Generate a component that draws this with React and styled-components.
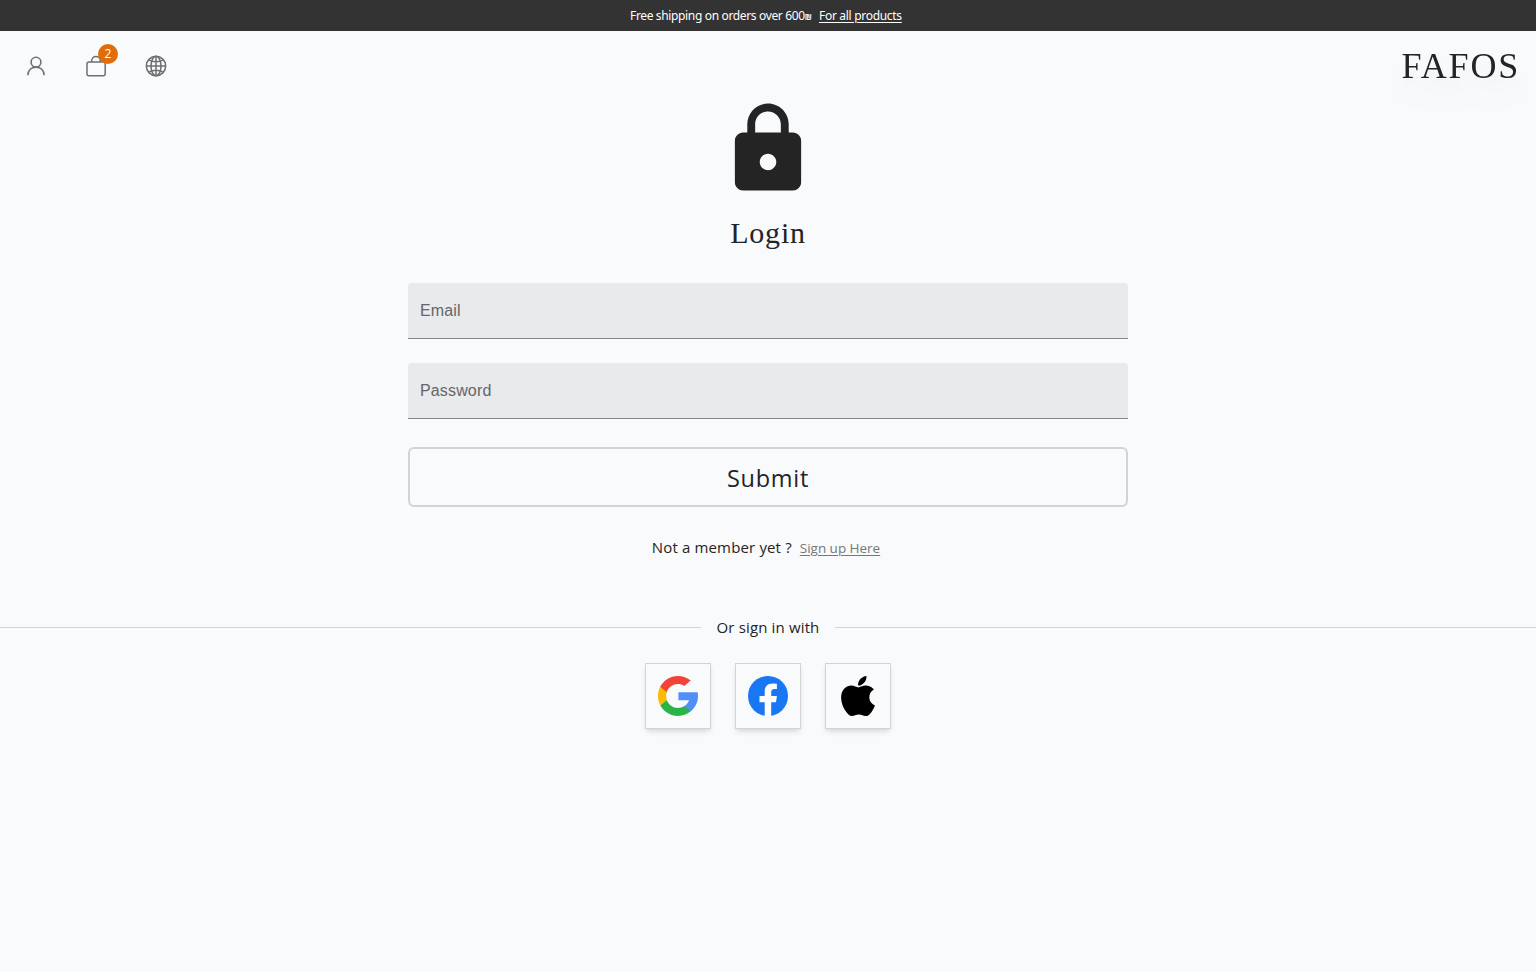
import React from "react";
import styled, { createGlobalStyle } from "styled-components";
import { IoMdLock } from "react-icons/io";
import { FaApple } from "react-icons/fa";

const GlobalStyle = createGlobalStyle`
  *, *::before, *::after { box-sizing: border-box; }
  body {
    margin: 0;
    background: #f8fafc;
    color: #242424;
    font-family: "Open Sans", "Noto Sans", sans-serif;
  }
`;

const Page = styled.div`
  min-height: 972px;
  overflow: hidden;
`;

const Banner = styled.div`
  display: flex;
  justify-content: center;
  align-items: center;
  gap: 8px;
  height: 31px;
  padding-right: 4px;
  background: #333;
  color: #fff;
  font-family: "Noto Sans", sans-serif;
  font-size: 12px;
  line-height: 16px;
  white-space: nowrap;
`;

const BannerText = styled.span`
  width: 181px;
  height: 16px;
  letter-spacing: -0.35px;
`;

const Shekel = styled.span`
  font-size: 8px;
  font-weight: 600;
  line-height: 8px;
  letter-spacing: -1px;
`;

const BannerLink = styled.a`
  width: 83px;
  height: 16px;
  letter-spacing: -0.3px;
  text-decoration: underline;
  text-underline-offset: 2px;
  text-decoration-thickness: 1px;
`;

const Header = styled.header`
  display: flex;
  justify-content: space-between;
  align-items: center;
  height: 70px;
  padding: 0 16px 0 24px;
`;

const Nav = styled.nav`
  display: flex;
  gap: 36px;
  color: #6f6f6f;
`;

const NavButton = styled.a`
  position: relative;
  display: block;
  width: 24px;
  height: 24px;
  svg { display: block; }
`;

const Badge = styled.span`
  position: absolute;
  top: -10px;
  left: 14px;
  width: 20px;
  height: 20px;
  border-radius: 50%;
  background: #e06c0c;
  color: #fff;
  font-size: 12px;
  line-height: 20px;
  text-align: center;
`;

const Logo = styled.div`
  font-family: "Liberation Serif", serif;
  font-size: 36px;
  line-height: 40px;
  letter-spacing: 1.8px;
  filter: drop-shadow(0 20px 13px rgba(0, 0, 0, 0.04)) drop-shadow(0 8px 5px rgba(0, 0, 0, 0.04));
`;

const LoginPanel = styled.main`
  display: flex;
  flex-direction: column;
  align-items: center;
  width: 720px;
  margin: 0 auto;
`;

const LockIcon = styled(IoMdLock)`
  display: block;
  width: 106px;
  height: 106px;
  margin-top: -7px;
`;

const Title = styled.h1`
  margin: 15px 0 32px;
  font-family: "Liberation Serif", serif;
  font-size: 30px;
  line-height: 36px;
  font-weight: 400;
  letter-spacing: 0.8px;
`;

const Field = styled.label`
  display: flex;
  align-items: center;
  width: 100%;
  height: 56px;
  margin-bottom: 24px;
  padding: 0 12px;
  border-bottom: 1px solid #858688;
  border-radius: 4px 4px 0 0;
  background: #e8eaeb;
  color: #656667;
  font-family: "Liberation Sans", sans-serif;
  font-size: 16px;
  letter-spacing: 0.15px;
`;

const SubmitButton = styled.button`
  width: 100%;
  height: 60px;
  margin-top: 4px;
  padding: 2px 0 0;
  border: 2px solid #d1d3d8;
  border-radius: 6px;
  background: transparent;
  color: #242424;
  font-family: inherit;
  font-size: 23.5px;
  font-weight: 400;
  line-height: 32px;
  letter-spacing: 0.7px;
`;

const SignUp = styled.div`
  display: flex;
  align-items: center;
  gap: 8px;
  height: 24px;
  margin: 28px 4px 0 0;
  font-size: 15px;
  white-space: nowrap;
`;

const Question = styled.span`
  letter-spacing: 0.15px;
`;

const SignUpLink = styled.a`
  padding-top: 1px;
  color: #777;
  font-size: 13.5px;
  letter-spacing: -0.02px;
  text-decoration: underline;
  text-decoration-thickness: 1px;
  text-underline-offset: 2px;
`;

const Divider = styled.div`
  display: flex;
  align-items: center;
  gap: 16px;
  height: 24px;
  margin-top: 56px;
  font-size: 15px;
  letter-spacing: 0.15px;
  white-space: nowrap;
  &::before, &::after {
    content: "";
    flex: 1;
    height: 1px;
    background: #d1d3d8;
  }
`;

const Providers = styled.div`
  display: flex;
  justify-content: center;
  gap: 24px;
  margin-top: 24px;
`;

const ProviderButton = styled.a`
  display: grid;
  place-items: center;
  width: 66px;
  height: 66px;
  border: 1px solid #d1d3d8;
  background: #f8fafc;
  box-shadow: 0 4px 6px -1px rgba(0, 0, 0, 0.1), 0 2px 4px -2px rgba(0, 0, 0, 0.1);
  svg { display: block; }
`;

const UserIcon = () => (
  <svg width="24" height="24" viewBox="0 0 24 24" fill="none" stroke="currentColor" strokeWidth="1.6">
    <circle cx="12" cy="8.2" r="4.900" />
    <path d="M3.900 21.200c.2-4.700 3.300-8 8.100-8s7.900 3.300 8.100 8" />
  </svg>
);

const BagIcon = () => (
  <svg width="24" height="24" viewBox="0 0 24 24" fill="none" stroke="currentColor" strokeWidth="1.5">
    <rect x="3" y="8" width="18.200" height="13.700" rx="2" />
    <path d="M7.700 8V6.800a4.300 4.300 0 0 1 8.600 0V8" />
  </svg>
);

const GlobeIcon = () => (
  <svg width="24" height="24" viewBox="0 0 24 24" fill="none" stroke="currentColor" strokeWidth="1.5">
    <circle cx="12" cy="12" r="9.700" />
    <ellipse cx="12" cy="12" rx="5" ry="9.700" />
    <path d="M12 2.300v19.400M2.300 12h19.400M4.700 5.800c4.300 2.400 10.300 2.400 14.600 0M4.700 18.200c4.300-2.400 10.300-2.400 14.600 0" />
  </svg>
);

const GoogleIcon = () => (
  <svg width="40" height="40" viewBox="0 0 512 512">
    <path fill="#fbbb00" d="M113.470 309.408L95.648 375.940l-65.139 1.378C11.042 341.211 0 299.900 0 256c0-42.451 10.324-82.483 28.624-117.732h.014L86.630 148.900l25.404 57.644c-5.317 15.501-8.215 32.141-8.215 49.456.002 18.792 3.406 36.797 9.651 53.408z" />
    <path fill="#518ef8" d="M507.527 208.176C510.467 223.662 512 239.655 512 256c0 18.328-1.927 36.206-5.598 53.451-12.462 58.683-45.025 109.925-90.134 146.187l-.014-.014-73.044-3.727-10.338-64.535c29.932-17.554 53.324-45.025 65.646-77.911h-136.890V208.176h245.899z" />
    <path fill="#28b446" d="M416.253 455.624l.014.014C372.396 490.901 316.666 512 256 512c-97.491 0-182.252-54.491-225.491-134.681l82.961-67.910c21.619 57.698 77.278 98.771 142.530 98.771 28.047 0 54.323-7.582 76.870-20.818l83.383 68.262z" />
    <path fill="#f14336" d="M419.404 58.936l-82.933 67.896C313.136 112.246 285.552 103.820 256 103.820c-66.729 0-123.429 42.957-143.965 102.724l-83.397-68.276h-.014C71.230 56.123 157.060 0 256 0c62.115 0 119.068 22.126 163.404 58.936z" />
  </svg>
);

const FacebookIcon = () => (
  <svg width="40" height="40" viewBox="0 0 40 40">
    <circle cx="20" cy="20" r="20" fill="#1877f2" />
    <path fill="#fff" d="M16.700 40V26.200h-5.200V20h5.200v-4.300c0-5.200 3-8.100 7.700-8.100 2.200 0 4.500.4 4.500.4v5.100h-2.500c-2.500 0-3.200 1.500-3.200 3.100V20h5.700l-.9 6.200h-4.800V40a20 20 0 0 1-6.500 0z" />
  </svg>
);

export default function App() {
  return (
    <Page>
      <GlobalStyle />
      <Banner>
        <BannerText>Free shipping on orders over 600<Shekel>₪</Shekel></BannerText>
        <BannerLink>For all products</BannerLink>
      </Banner>
      <Header>
        <Nav>
          <NavButton><UserIcon /></NavButton>
          <NavButton><BagIcon /><Badge>2</Badge></NavButton>
          <NavButton><GlobeIcon /></NavButton>
        </Nav>
        <Logo>FAFOS</Logo>
      </Header>
      <LoginPanel>
        <LockIcon />
        <Title>Login</Title>
        <Field>Email</Field>
        <Field>Password</Field>
        <SubmitButton>Submit</SubmitButton>
        <SignUp>
          <Question>Not a member yet ?</Question>
          <SignUpLink>Sign up Here</SignUpLink>
        </SignUp>
      </LoginPanel>
      <Divider>Or sign in with</Divider>
      <Providers>
        <ProviderButton><GoogleIcon /></ProviderButton>
        <ProviderButton><FacebookIcon /></ProviderButton>
        <ProviderButton><FaApple size={46} color="#000" /></ProviderButton>
      </Providers>
    </Page>
  );
}
